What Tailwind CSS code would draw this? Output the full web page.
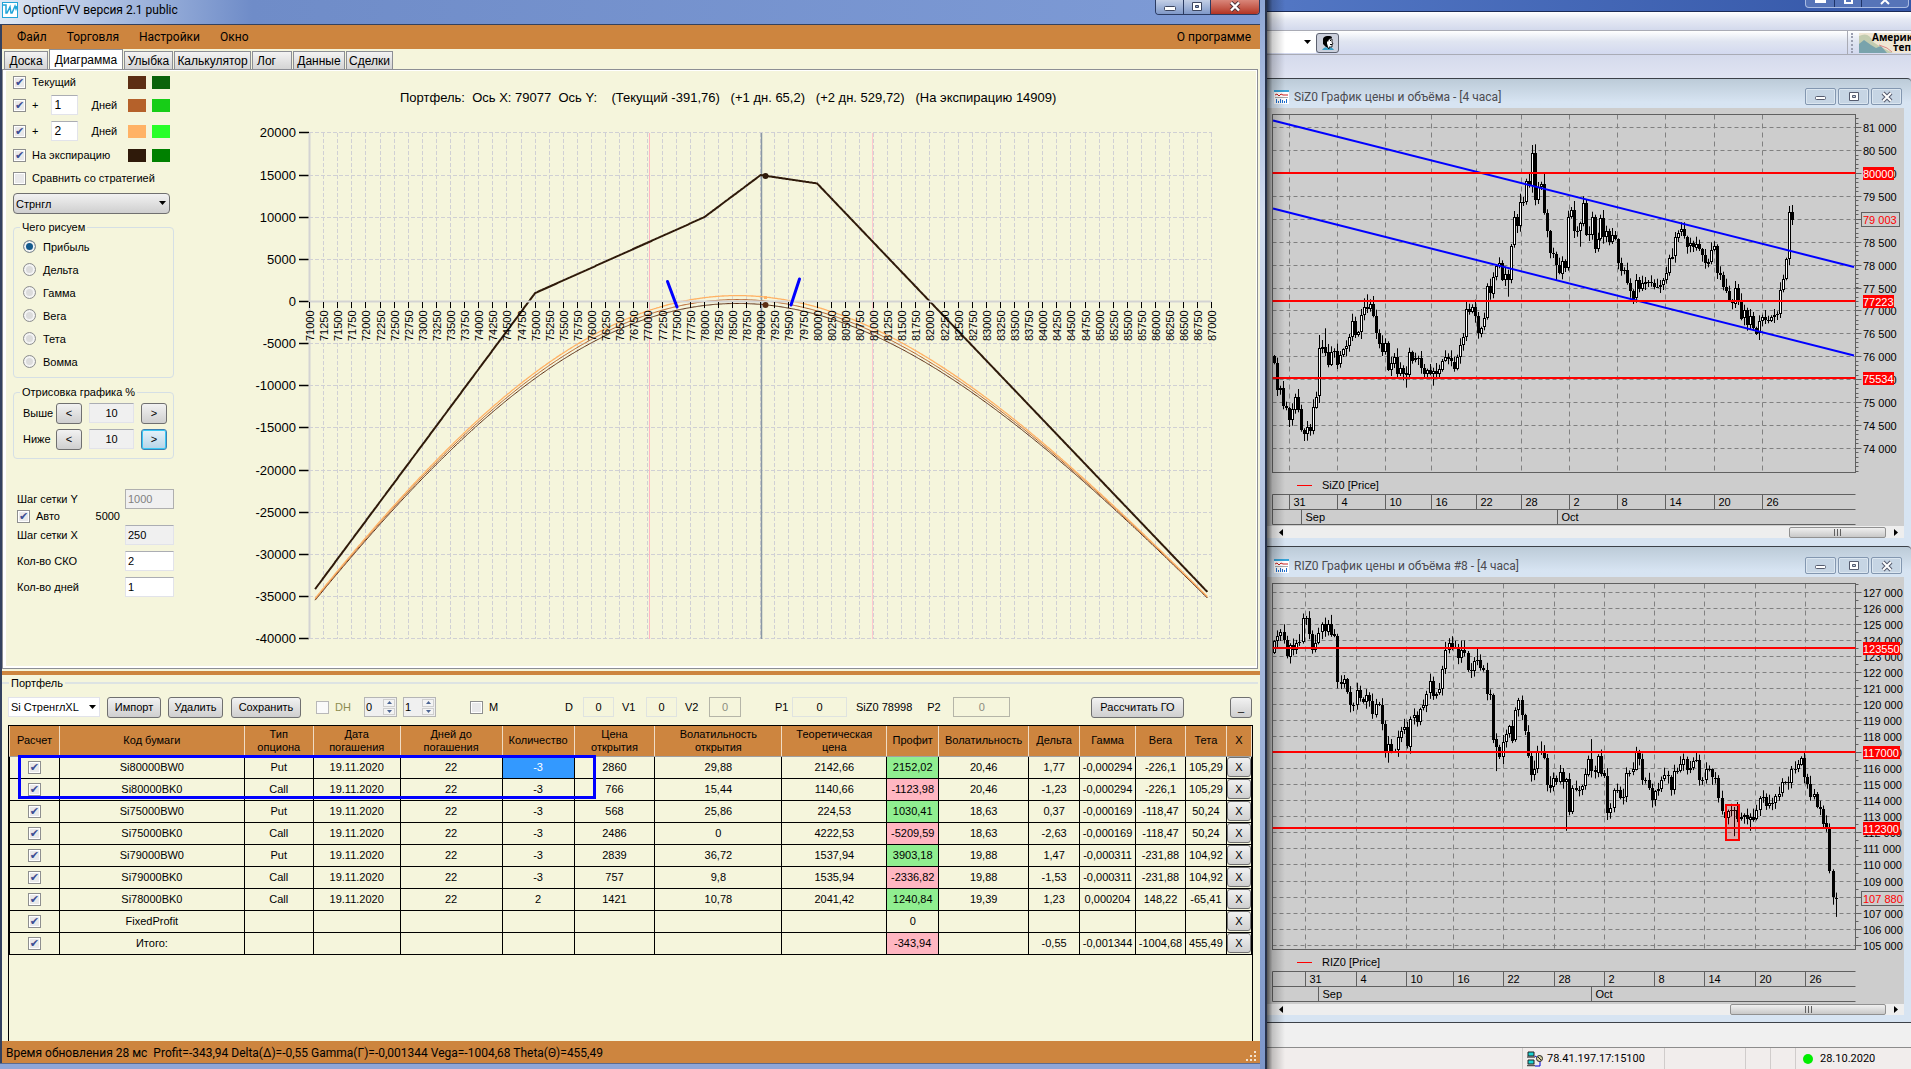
<!DOCTYPE html>
<html lang="ru">
 <head>
  <meta charset="utf-8"/>
  <meta content="width=device-width, initial-scale=1.0" name="viewport"/>
  <title>OptionFVV версия 2.1 public</title>
  <script src="https://cdn.jsdelivr.net/npm/@tailwindcss/browser@4"></script>
 </head>
 <body class="grid min-h-screen grid-cols-[1267fr_644fr] bg-[#d5daec] font-['Liberation_Sans',Arial,sans-serif] text-[11px] leading-4 text-black">

  <!-- Options window -->
  <main class="flex min-w-0 flex-col border-r-2 border-[#27324a] bg-linear-to-b from-[#8ea6d4] via-[#d3ddef] via-20% to-[#7d97ca] pr-[5px]">
   <header class="flex h-6 items-start bg-linear-to-r from-[#dfe8f4] via-[#6f8cc8] via-20% to-[#7e9bd6] pl-[2px]">
    <svg class="mt-[2px] h-4 w-4" viewBox="0 0 16 16"><rect width="16" height="16" fill="#23a4d8"/><rect x="1" y="1" width="14" height="14" fill="#fff"/><path d="M1 3h3v8h1l3-6 1 6h1l3-7 1 3 1-3" fill="none" stroke="#23a4d8" stroke-width="1.5"/></svg>
    <h1 class="ml-[5px] mt-[2px] font-[Roboto,sans-serif] text-[12px]">OptionFVV версия 2.1 public</h1>
    <div class="ml-auto flex h-[15px] divide-x divide-[#2b3b62] overflow-hidden rounded-b border border-t-0 border-[#2b3b62]">
     <button aria-label="Свернуть" class="grid w-7 place-items-center bg-linear-to-b from-[#c3cfe6] to-[#7f98c8]"><svg class="h-3 w-4" viewBox="0 0 16 12"><rect x="2.500" y="5.500" width="11" height="4" rx="1" fill="#fff" stroke="#3c4660"/></svg></button>
     <button aria-label="Развернуть" class="grid w-[27px] place-items-center bg-linear-to-b from-[#c3cfe6] to-[#7f98c8]"><svg class="h-3 w-4" viewBox="0 0 16 12"><path d="M3.500 1.500h9v8h-9z" fill="#fff" stroke="#3c4660"/><path d="M6.500 4.500h3v2h-3z" fill="#8ba0ca" stroke="#3c4660"/></svg></button>
     <button aria-label="Закрыть" class="grid w-12 place-items-center bg-linear-to-b from-[#d9867a] to-[#b23222]"><svg class="h-3 w-4" viewBox="0 0 16 12"><path d="M4 1.500l8 8M12 1.500l-8 8" stroke="#4a3038" stroke-width="4"/><path d="M4 1.500l8 8M12 1.500l-8 8" stroke="#fff" stroke-width="2.400"/></svg></button>
    </div>
   </header>

   <div class="flex flex-1 flex-col border-l-2 border-t border-[#33415f] bg-[#f5f5dc]">
    <nav class="flex h-6 items-center gap-5 bg-[#cd853f] pl-[15px] pr-[9px] font-[Roboto,sans-serif] text-[12px]">
     <a href="#">Файл</a><a href="#">Торговля</a><a href="#">Настройки</a><a href="#">Окно</a>
     <a class="ml-auto" href="#">О программе</a>
    </nav>

    <div class="flex h-5 items-end gap-px pl-[2px] text-[12px]">
     <button class="h-[18px] w-[44px] border border-b-0 border-[#8c8e94] bg-linear-to-b from-[#f3f3f3] to-[#d4d4d4]">Доска</button>
     <button class="h-5 w-[74px] border border-b-0 border-[#8c8e94] bg-white">Диаграмма</button>
     <button class="h-[18px] w-[49px] border border-b-0 border-[#8c8e94] bg-linear-to-b from-[#f3f3f3] to-[#d4d4d4]">Улыбка</button>
     <button class="h-[18px] w-[77px] border border-b-0 border-[#8c8e94] bg-linear-to-b from-[#f3f3f3] to-[#d4d4d4]">Калькулятор</button>
     <button class="h-[18px] w-[40px] border border-b-0 border-[#8c8e94] bg-linear-to-b from-[#f3f3f3] to-[#d4d4d4] pl-1 text-left">Лог</button>
     <button class="h-[18px] w-[52px] border border-b-0 border-[#8c8e94] bg-linear-to-b from-[#f3f3f3] to-[#d4d4d4]">Данные</button>
     <button class="h-[18px] w-[47px] border border-b-0 border-[#8c8e94] bg-linear-to-b from-[#f3f3f3] to-[#d4d4d4]">Сделки</button>
    </div>

    <section class="mr-[2px] border border-[#8c8e94] bg-white pb-[2px] pl-[3px] pr-px pt-px">
     <div class="flex bg-[#f5f5dc]">
      <!-- Settings -->
      <form class="w-[174px] shrink-0 pl-[7px]">
       <div class="flex h-[22px] items-center">
        <label class="flex items-center gap-[6px]"><input checked class="check size-[13px]" type="checkbox"/>Текущий</label>
        <span class="ml-auto h-[13px] w-[18px] bg-[#5c2e14]"></span><span class="ml-[6px] mr-[10px] h-[13px] w-[18px] bg-[#0b630b]"></span>
       </div>
       <div class="flex h-6 items-center">
        <label class="flex items-center gap-[6px]"><input checked class="check size-[13px]" type="checkbox"/>+</label>
        <input aria-label="Дней 1" class="ml-[13px] h-5 w-[27px] border border-[#e2e3ea] border-t-[#abadb3] bg-white pl-[2px] text-[12px]" value="1"/>
        <span class="ml-[13px]">Дней</span>
        <span class="ml-auto h-[13px] w-[18px] bg-[#b5612a]"></span><span class="ml-[6px] mr-[10px] h-[13px] w-[18px] bg-[#17cd17]"></span>
       </div>
       <div class="flex h-7 items-center">
        <label class="flex items-center gap-[6px]"><input checked class="check size-[13px]" type="checkbox"/>+</label>
        <input aria-label="Дней 2" class="ml-[13px] h-5 w-[27px] border border-[#e2e3ea] border-t-[#abadb3] bg-white pl-[2px] text-[12px]" value="2"/>
        <span class="ml-[13px]">Дней</span>
        <span class="ml-auto h-[13px] w-[18px] bg-[#ffb265]"></span><span class="ml-[6px] mr-[10px] h-[13px] w-[18px] bg-[#28ff28]"></span>
       </div>
       <div class="flex h-5 items-center">
        <label class="flex items-center gap-[6px]"><input checked class="check size-[13px]" type="checkbox"/>На экспирацию</label>
        <span class="ml-auto h-[13px] w-[18px] bg-[#2f1a0a]"></span><span class="ml-[6px] mr-[10px] h-[13px] w-[18px] bg-[#008000]"></span>
       </div>
       <div class="flex h-[26px] items-center">
        <label class="flex items-center gap-[6px]"><input class="check size-[13px]" type="checkbox"/>Сравнить со стратегией</label>
       </div>
       <div class="relative mt-[2px] w-[157px]">
        <select aria-label="Стратегия" class="h-[21px] w-full appearance-none rounded-sm border border-[#707070] bg-linear-to-b from-[#f2f2f2] to-[#cfcfcf] pl-[2px] text-[11px]"><option>Стрнгл</option></select>
        <svg class="pointer-events-none absolute right-1 top-2 h-[5px] w-[7px]" viewBox="0 0 7 5"><path d="M0 0h7L3.500 4z"/></svg>
       </div>
       <fieldset class="mt-[5px] w-[161px] rounded border border-[#d5dfe5] pb-1 pl-[9px]">
        <legend class="-ml-[3px] px-[2px]">Чего рисуем</legend>
        <label class="flex h-[23px] items-center gap-[7px]"><input checked class="dot" name="mode" type="radio"/>Прибыль</label>
        <label class="flex h-[23px] items-center gap-[7px]"><input class="dot" name="mode" type="radio"/>Дельта</label>
        <label class="flex h-[23px] items-center gap-[7px]"><input class="dot" name="mode" type="radio"/>Гамма</label>
        <label class="flex h-[23px] items-center gap-[7px]"><input class="dot" name="mode" type="radio"/>Вега</label>
        <label class="flex h-[23px] items-center gap-[7px]"><input class="dot" name="mode" type="radio"/>Тета</label>
        <label class="flex h-[23px] items-center gap-[7px]"><input class="dot" name="mode" type="radio"/>Вомма</label>
       </fieldset>
       <fieldset class="mt-[6px] w-[161px] rounded border border-[#d5dfe5] pb-[6px] pl-[9px]">
        <legend class="-ml-[3px] px-[2px]">Отрисовка графика %</legend>
        <div class="flex h-[26px] items-center">
         <label class="w-[33px]" for="up">Выше</label>
         <button class="h-[21px] w-[26px] rounded-[3px] border border-[#707070] bg-linear-to-b from-[#f2f2f2] to-[#cfcfcf]" type="button">&lt;</button>
         <input class="mx-[7px] h-5 w-[45px] border border-[#e2e3ea] border-t-[#abadb3] bg-[#f0f0f0] text-center" id="up" readonly value="10"/>
         <button class="h-[21px] w-[26px] rounded-[3px] border border-[#707070] bg-linear-to-b from-[#f2f2f2] to-[#cfcfcf]" type="button">&gt;</button>
        </div>
        <div class="flex h-[26px] items-center">
         <label class="w-[33px]" for="down">Ниже</label>
         <button class="h-[21px] w-[26px] rounded-[3px] border border-[#707070] bg-linear-to-b from-[#f2f2f2] to-[#cfcfcf]" type="button">&lt;</button>
         <input class="mx-[7px] h-5 w-[45px] border border-[#e2e3ea] border-t-[#abadb3] bg-[#f0f0f0] text-center" id="down" readonly value="10"/>
         <button class="h-[21px] w-[26px] rounded-[3px] border border-[#3c7fb1] bg-linear-to-b from-[#e6f2f9] to-[#b5d5e8] inset-ring inset-ring-[#38c8f4]" type="button">&gt;</button>
        </div>
       </fieldset>
       <div class="mt-[29px] w-[161px] pl-1">
        <div class="flex h-[21px] items-center justify-between"><label for="sy">Шаг сетки Y</label><input class="h-5 w-[49px] border border-[#afafaf] bg-[#f0f0f0] pl-[2px] text-[#808080]" disabled id="sy" value="1000"/></div>
        <div class="flex h-[14px] items-center"><label class="flex items-center gap-[6px]"><input checked class="check size-[13px]" type="checkbox"/>Авто</label><span class="ml-auto mr-[54px]">5000</span></div>
        <div class="flex h-6 items-center justify-between"><label for="sx">Шаг сетки X</label><input class="h-5 w-[49px] border border-[#e2e3ea] border-t-[#abadb3] bg-[#f0f0f0] pl-[2px]" id="sx" readonly value="250"/></div>
        <div class="flex h-7 items-center justify-between"><label for="sko">Кол-во СКО</label><input class="h-5 w-[49px] border border-[#e2e3ea] border-t-[#abadb3] bg-white pl-[2px]" id="sko" value="2"/></div>
        <div class="flex h-6 items-center justify-between"><label for="days">Кол-во дней</label><input class="h-5 w-[49px] border border-[#e2e3ea] border-t-[#abadb3] bg-white pl-[2px]" id="days" value="1"/></div>
       </div>
      </form>
      <svg class="min-w-0 flex-1" id="payoff" viewBox="180 71 1076 595"></svg>
     </div>
    </section>
    <div class="mt-[2px] h-1 bg-[#cd853f]"></div>

    <!-- Portfolio -->
    <fieldset class="mr-[2px] flex min-w-0 flex-1 flex-col border-t-2 border-[#dde3e3] pl-[6px] pr-[5px]">
     <legend class="ml-px px-[2px]">Портфель</legend>
     <div class="flex h-[34px] items-center pb-[2px] pr-px">
      <div class="relative w-[92px]">
       <select aria-label="Портфель" class="h-5 w-full appearance-none border border-[#e2e3ea] bg-white pl-[2px]"><option>Si СтренглXL</option></select>
       <svg class="pointer-events-none absolute right-1 top-2 h-[5px] w-[7px]" viewBox="0 0 7 5"><path d="M0 0h7L3.500 4z"/></svg>
      </div>
      <button class="ml-[7px] h-[21px] w-[54px] rounded-[3px] border border-[#707070] bg-linear-to-b from-[#f2f2f2] to-[#cfcfcf]">Импорт</button>
      <button class="ml-[7px] h-[21px] w-[55px] rounded-[3px] border border-[#707070] bg-linear-to-b from-[#f2f2f2] to-[#cfcfcf]">Удалить</button>
      <button class="ml-2 h-[21px] w-[70px] rounded-[3px] border border-[#707070] bg-linear-to-b from-[#f2f2f2] to-[#cfcfcf]">Сохранить</button>
      <label class="ml-[15px] flex w-[48px] items-center gap-[6px] text-[#8c8c50]"><input class="size-[13px] appearance-none border border-[#b8b8b8] bg-[#fafafa]" disabled type="checkbox"/>DH</label>
      <div class="flex h-5 w-[33px] border border-[#b5b5b5] bg-[#f0f0f0]"><input aria-label="DH от" class="min-w-0 flex-1 pl-px" value="0"/><span class="spin"></span></div>
      <div class="ml-[6px] flex h-5 w-[33px] border border-[#b5b5b5] bg-[#f0f0f0]"><input aria-label="DH до" class="min-w-0 flex-1 pl-px" value="1"/><span class="spin"></span></div>
      <label class="ml-[34px] flex w-[95px] items-center gap-[6px]"><input class="check size-[13px]" type="checkbox"/>M</label>
      <label class="w-[18px]" for="d">D</label><input class="h-5 w-[31px] border border-[#dfe3e0] text-center" id="d" value="0"/>
      <label class="ml-2 w-6" for="v1">V1</label><input class="h-5 w-[31px] border border-[#dfe3e0] text-center" id="v1" value="0"/>
      <label class="ml-2 w-6" for="v2">V2</label><input class="h-5 w-[32px] border border-[#b5b5a8] text-center text-[#8c8c80]" disabled id="v2" value="0"/>
      <label class="ml-[34px] w-[17px]" for="p1">P1</label><input class="h-5 w-[55px] border border-[#dfe3e0] text-center" id="p1" value="0"/>
      <span class="ml-[9px] whitespace-nowrap">SiZ0 78998</span>
      <label class="ml-[15px] w-[26px]" for="p2">P2</label><input class="h-5 w-[57px] border border-[#b5b5a8] text-center text-[#8c8c80]" disabled id="p2" value="0"/>
      <button class="ml-auto h-[21px] w-[93px] rounded-[3px] border border-[#707070] bg-linear-to-b from-[#f2f2f2] to-[#cfcfcf]">Рассчитать ГО</button>
      <button aria-label="Свернуть таблицу" class="ml-[46px] h-[21px] w-[22px] rounded-[3px] border border-[#707070] bg-linear-to-b from-[#f2f2f2] to-[#cfcfcf]">_</button>
     </div>
     <div class="relative flex-1 border border-b-0 border-black">
      <table class="w-full table-fixed border-collapse text-center">
       <colgroup id="cols"></colgroup>
       <thead><tr class="h-[30px] bg-[#cd853f] leading-[13px]" id="head"></tr></thead>
       <tbody id="rows"></tbody>
      </table>
      <div class="pointer-events-none absolute left-[9px] top-[29px] h-[44px] w-[578px] border-3 border-[#0000ff]"></div>
     </div>
    </fieldset>
    <footer class="flex h-[22px] items-center justify-between bg-[#cd853f] pl-1 pr-[2px] pt-[2px] font-[Roboto,sans-serif] text-[12px]">
     <span class="whitespace-pre">Время обновления 28 мс  Profit=-343,94 Delta(Δ)=-0,55 Gamma(Γ)=-0,001344 Vega=-1004,68 Theta(Θ)=455,49</span>
     <svg class="h-3 w-3 self-end" viewBox="0 0 12 12" fill="#f3e3cf"><path d="M8 0h2v2H8zM4 4h2v2H4zM8 4h2v2H8zM0 8h2v2H0zM4 8h2v2H4zM8 8h2v2H8z"/></svg>
    </footer>
   </div>
   <div class="h-[6px] border-t border-[#5b6b90] bg-[#8fa6d8]"></div>
  </main>

  <!-- Terminal behind -->
  <aside class="relative flex min-w-0 flex-col overflow-hidden">
   <div class="flex h-3 justify-end border-b border-[#1b2b57] bg-linear-to-r from-[#5377c4] to-[#3557a8] pr-[2px]">
    <div class="flex h-2 divide-x divide-[#1f3468] rounded-b border border-t-0 border-[#a9bbe2] bg-[#5674b8]">
     <span class="flex w-[29px] justify-center"><span class="h-[3px] w-[11px] bg-white"></span></span>
     <span class="flex w-[27px] justify-center"><span class="h-1 w-[9px] border-2 border-t-0 border-white"></span></span>
     <svg class="h-[7px] w-[46px]" viewBox="0 0 46 7"><path d="M19 4l4-4 4 4" stroke="#fff" stroke-width="2" fill="none"/></svg>
    </div>
   </div>
   <div class="h-[18px] bg-linear-to-b from-white via-[#e6eaf4] via-40% to-[#d3d9ec]"></div>
   <div class="flex h-[25px] items-center border-y border-[#a9abb5] bg-linear-to-b from-white via-[#e0e5f1] via-45% to-[#d3d9ef]">
    <button aria-label="Список" class="flex h-5 w-[49px] items-center justify-end bg-white pr-[5px]"><svg class="h-[5px] w-[7px]" viewBox="0 0 7 5"><path d="M0 0h7L3.500 4z"/></svg></button>
    <button aria-label="Пользователь" class="grid h-5 w-[23px] place-items-center rounded-[3px] border border-[#5d6270] bg-[#ccd0dc]"><svg class="h-4 w-4" viewBox="0 0 16 16"><path d="M2 15c1-2 3-3 6-3s5 1 6 3z" fill="#3aa0c8"/><path d="M6 4h6v3l1 2h-1v3H9v2L7 12z" fill="#fff" stroke="#000" stroke-width=".8"/><path d="M3 5c0-3 2-4 5-4 2 0 4 0 4 2L9 4 8 7l-1-1v3l1 3H6L3 9z"/><path d="M10 5h1v1h-1zM10 9h2v1h-2z"/></svg></button>
    <span class="ml-auto h-full border-l border-[#a9abb5]"></span>
    <span class="ml-[3px] h-5 border-l-2 border-dotted border-[#9a9eb0]"></span>
    <svg class="ml-[6px] h-5 w-[52px]" viewBox="0 0 52 20" font-family="Open Sans, sans-serif" font-size="10" font-weight="700"><rect width="52" height="20" fill="#efe6d4"/><path d="M0 3q10-5 14 6l8 5 12 6H0z" fill="#c3ccb0"/><path d="M0 11l5-4 7 5 5 3 5-2 6 7H0z" fill="#79a3ac"/><path d="M20 12l8 3 5 4" stroke="#d88" fill="none"/><text x="13" y="8">Американ</text><text x="34" y="18">тепло</text></svg>
   </div>
   <div class="h-[23px] bg-linear-to-b from-[#d5daec] to-[#e0e4f2]"></div>

   <section class="rounded-tr border-t border-[#3c4148] bg-linear-to-b from-[#bccbd8] to-[#d7e4f2] to-5%">
    <header class="flex h-[29px] items-center pl-[7px] pr-[9px] pt-[6px]">
     <svg class="h-[14px] w-[15px]" viewBox="0 0 15 14"><path d="M0 0h15v14H0z" fill="#fff"/><path d="M0 0h15v2H0z" fill="#35a3d8"/><path d="M1 5l2-1 2 2 2-2 2 1h5" stroke="#c22" fill="none"/><path d="M1 7.500h13" stroke="#aaa"/><path d="M2.500 13V9m2 4v-2m2 2V9m2 4v-3m2 3v-2m2 2V9" stroke="#1f6fd0"/></svg>
     <h2 class="ml-[5px] font-[Roboto,sans-serif] text-[12px] text-[#4b4b50]">SiZ0 График цены и объёма - [4 часа]</h2>
     <div class="capbtns ml-auto flex gap-[2px]"></div>
    </header>
    <div class="pb-2 pr-[7px]">
     <svg class="block w-full bg-[#cdcdcd]" id="si" viewBox="1267 108 637 418"></svg>
     <div class="flex h-3 items-center bg-[#eeeeee] pl-3 pr-[6px]">
      <svg class="h-[7px] w-1" viewBox="0 0 4 7"><path d="M4 0v7L0 3.500z"/></svg>
      <span class="ml-auto mr-2 grid h-[11px] w-[97px] place-items-center rounded-xs border border-[#909090] bg-linear-to-b from-[#f0f0f0] to-[#c8c8c8]"><span class="h-[7px] w-[7px] border-x border-[#606060] px-[2px]"><span class="block h-full w-px bg-[#606060]"></span></span></span>
      <svg class="h-[7px] w-1" viewBox="0 0 4 7"><path d="M0 0v7l4-3.500z"/></svg>
     </div>
    </div>
   </section>

   <section class="rounded-tr border-y border-[#3c4148] bg-linear-to-b from-[#bccbd8] to-[#d7e4f2] to-5%">
    <header class="flex h-[30px] items-center pl-[7px] pr-[9px] pt-[7px]">
     <svg class="h-[14px] w-[15px]" viewBox="0 0 15 14"><path d="M0 0h15v14H0z" fill="#fff"/><path d="M0 0h15v2H0z" fill="#35a3d8"/><path d="M1 5l2-1 2 2 2-2 2 1h5" stroke="#c22" fill="none"/><path d="M1 7.500h13" stroke="#aaa"/><path d="M2.500 13V9m2 4v-2m2 2V9m2 4v-3m2 3v-2m2 2V9" stroke="#1f6fd0"/></svg>
     <h2 class="ml-[5px] font-[Roboto,sans-serif] text-[12px] text-[#4b4b50]">RIZ0 График цены и объёма #8 - [4 часа]</h2>
     <div class="capbtns ml-auto flex gap-[2px]"></div>
    </header>
    <div class="pb-[7px] pr-[7px]">
     <svg class="block w-full bg-[#cdcdcd]" id="ri" viewBox="1267 577 637 427"></svg>
     <div class="flex h-[11px] items-center bg-[#eeeeee] pl-3 pr-[6px]">
      <svg class="h-[7px] w-1" viewBox="0 0 4 7"><path d="M4 0v7L0 3.500z"/></svg>
      <span class="ml-auto mr-2 grid h-[11px] w-[156px] place-items-center rounded-xs border border-[#909090] bg-linear-to-b from-[#f0f0f0] to-[#c8c8c8]"><span class="h-[7px] w-[7px] border-x border-[#606060] px-[2px]"><span class="block h-full w-px bg-[#606060]"></span></span></span>
      <svg class="h-[7px] w-1" viewBox="0 0 4 7"><path d="M0 0v7l4-3.500z"/></svg>
     </div>
    </div>
   </section>

   <div class="flex-1 border-b border-[#8c8c8c] bg-[#f0f0f0]"></div>
   <footer class="flex h-[21px] items-stretch justify-end divide-x divide-[#d0cccb] bg-[#f1edec] font-[Roboto,sans-serif] text-[11px] leading-[21px]">
    <span></span>
    <span class="flex w-[142px] items-center gap-1 pl-1">
     <svg class="h-4 w-4" viewBox="0 0 16 16"><path d="M1 1h6v4H1zM1 9h6v4H1z" fill="#19d3d3" stroke="#222"/><path d="M0 6h8M0 14.500h8" stroke="#555" stroke-width="1.500"/><path d="M8 5l3 2M13 10v5H8" stroke="#00d" fill="none"/><circle cx="12.500" cy="7.500" r="3" fill="#d8d0a0" stroke="#222"/><path d="M11 6l3 3" stroke="#222"/></svg>
     78.41.197.17:15100
    </span>
    <span class="w-[81px]"></span>
    <span class="w-[25px]"></span>
    <span class="w-[25px]"></span>
    <span class="flex w-[115px] items-center gap-[7px] pl-[7px]"><span class="size-[10px] rounded-full bg-[#00ee00]"></span>28.10.2020</span>
   </footer>
   <!-- drop shadow of the front window -->
   <div class="pointer-events-none absolute inset-y-0 left-0 w-[18px] bg-linear-to-r from-black/60 via-black/20 via-30% to-transparent"></div>
  </aside>

  <script>
   const $ = id => document.getElementById(id);

   // form control looks
   document.querySelectorAll('.check').forEach(el => el.className = checkClass());
   function checkClass() {
     return "grid size-[13px] shrink-0 appearance-none place-items-center border border-[#8e8f8f] bg-[#e9e9ea] inset-ring inset-ring-white checked:before:text-[11px] checked:before:leading-[11px] checked:before:font-['DejaVu_Sans'] checked:before:text-[#3c4f94] checked:before:content-['✔']";
   }
   document.querySelectorAll('.dot').forEach(el => el.className =
     'size-[13px] appearance-none rounded-full border border-[#8e8f8f] bg-[#dcdcdc] inset-ring-2 inset-ring-[#f4f4f4] checked:bg-[#145a8c]');
   document.querySelectorAll('.spin').forEach(el => {
     el.className = 'grid w-[14px] grid-rows-2 gap-px p-px';
     el.innerHTML = ['M0 3L2.5 0 5 3z', 'M0 0h5L2.5 3z'].map(d =>
       `<button aria-label="Шаг" class="grid place-items-center border border-[#cfcfcf] bg-[#f4f4f4]"><svg class="h-[3px] w-[5px]" viewBox="0 0 5 3"><path d="${d}" fill="#4a6392"/></svg></button>`).join('');
   });
   document.querySelectorAll('.capbtns').forEach(el => {
     const icons = {
       'Свернуть': '<rect x="2.5" y="5.5" width="10" height="3" rx="1" fill="#fff" stroke="#555b6e"/>',
       'Развернуть': '<path d="M3.500 1.500h9v8h-9z" fill="#fff" stroke="#555b6e"/><path d="M6.500 4.500h3v2h-3z" fill="#c3d2e2" stroke="#555b6e"/>',
       'Закрыть': '<path d="M4 2l8 8M12 2l-8 8" stroke="#555b6e" stroke-width="4"/><path d="M4 2l8 8M12 2l-8 8" stroke="#fff" stroke-width="2"/>',
     };
     el.innerHTML = Object.entries(icons).map(([name, svg]) =>
       `<button aria-label="${name}" class="grid h-[17px] w-[31px] place-items-center rounded-xs border border-[#8397b0] bg-[#c6d5e4] inset-ring inset-ring-[#dbe6f0]"><svg class="h-3 w-4" viewBox="0 0 16 12">${svg}</svg></button>`).join('');
   });

   // positions table
   const widths = [50, 185, 69, 87, 102, 72, 81, 127, 105, 52, 90, 51, 56, 50, 41, 25];
   const heads = ['Расчет', 'Код бумаги', 'Тип<br>опциона', 'Дата<br>погашения', 'Дней до<br>погашения', 'Количество', 'Цена<br>открытия',
     'Волатильность<br>открытия', 'Теоретическая<br>цена', 'Профит', 'Волатильность', 'Дельта', 'Гамма', 'Вега', 'Тета', 'X'];
   const rows = [
     'Si80000BW0|Put|19.11.2020|22|-3|2860|29,88|2142,66|2152,02|20,46|1,77|-0,000294|-226,1|105,29',
     'Si80000BK0|Call|19.11.2020|22|-3|766|15,44|1140,66|-1123,98|20,46|-1,23|-0,000294|-226,1|105,29',
     'Si75000BW0|Put|19.11.2020|22|-3|568|25,86|224,53|1030,41|18,63|0,37|-0,000169|-118,47|50,24',
     'Si75000BK0|Call|19.11.2020|22|-3|2486|0|4222,53|-5209,59|18,63|-2,63|-0,000169|-118,47|50,24',
     'Si79000BW0|Put|19.11.2020|22|-3|2839|36,72|1537,94|3903,18|19,88|1,47|-0,000311|-231,88|104,92',
     'Si79000BK0|Call|19.11.2020|22|-3|757|9,8|1535,94|-2336,82|19,88|-1,53|-0,000311|-231,88|104,92',
     'Si78000BK0|Call|19.11.2020|22|2|1421|10,78|2041,42|1240,84|19,39|1,23|0,000204|148,22|-65,41',
     'FixedProfit||||||||0|||||',
     'Итого:||||||||-343,94||-0,55|-0,001344|-1004,68|455,49',
   ];
   const total = widths.reduce((a, b) => a + b);
   $('cols').innerHTML = widths.map(w => `<col style="width:${w / total * 100}%">`).join('');
   $('head').innerHTML = heads.map(h => `<th class="whitespace-nowrap border-x border-b border-x-[#f0dcc4] border-b-[#a0a0a0] font-normal">${h}</th>`).join('');
   $('rows').innerHTML = rows.map((r, n) => {
     const cells = r.split('|').map((v, i) => {
       let bg = '';
       if (i === 8 && v !== '0') bg = v.startsWith('-') ? 'bg-[#ffb6c1]' : 'bg-[#90ee90]';
       if (i === 4 && n === 0) bg = 'bg-[#3399ff] text-white';
       return `<td class="whitespace-nowrap border border-black ${bg}">${v}</td>`;
     }).join('');
     return `<tr class="h-[22px]"><td class="border border-black"><input aria-label="Расчет" checked type="checkbox" class="mx-auto ${checkClass()}"></td>${cells}` +
       `<td class="border border-black"><button class="block h-5 w-full rounded-[3px] border border-[#707070] bg-linear-to-b from-[#f2f2f2] to-[#cfcfcf]">X</button></td></tr>`;
   }).join('');

   const line = (x1, y1, x2, y2, stroke, extra = '') => `<path d="M${x1} ${y1}L${x2} ${y2}" stroke="${stroke}" fill="none" ${extra}/>`;
   const crisp = v => Math.floor(v) + .5;

   // profit chart: Black-76 value of the portfolio
   const legs = [['P', 80000, -3, .2046], ['C', 80000, -3, .2046], ['P', 75000, -3, .1863], ['C', 75000, -3, .1863],
     ['P', 79000, -3, .1988], ['C', 79000, -3, .1988], ['C', 78000, 2, .1939]];
   const cdf = x => {
     const t = 1 / (1 + .2316419 * Math.abs(x));
     const p = Math.exp(-x * x / 2) * .3989423 * t * (.3193815 + t * (-.3565638 + t * (1.781478 + t * (-1.821256 + t * 1.330274))));
     return x > 0 ? 1 - p : p;
   };
   const price = (type, f, k, s, days) => {
     let call = Math.max(f - k, 0);
     if (days) {
       const sd = s * Math.sqrt(days / 365), d1 = Math.log(f / k) / sd + sd / 2;
       call = f * cdf(d1) - k * cdf(d1 - sd);
     }
     return type === 'C' ? call : call - f + k;
   };
   const sum = (f, days) => legs.reduce((a, [t, k, q, s]) => a + q * price(t, f, k, s, days), 0);
   const base = 15000 - sum(79000, 0);
   const X = p => 309.5 + (p - 71000) * .0564, Y = v => 301.5 - v * .008433;
   const curve = days => {
     let d = '';
     for (let p = 71100; p <= 86920; p += 20) d += (d ? 'L' : 'M') + X(p).toFixed(1) + ' ' + Y(base + sum(p, days)).toFixed(1);
     return d;
   };
   let s = '<g font-family="Liberation Sans, Arial, sans-serif">';
   s += '<text x="400" y="102" font-size="13" xml:space="preserve">Портфель:  Ось X: 79077  Ось Y:    (Текущий -391,76)   (+1 дн. 65,2)   (+2 дн. 529,72)   (На экспирацию 14909)</text>';
   for (let v = -40000; v <= 20000; v += 5000) {
     const y = crisp(Y(v));
     s += line(309, y, 1212, y, '#d0d0d4', 'stroke-dasharray="4 2"') + line(299, y, 309, y, '#000', 'stroke-width="1.500"');
     s += `<text x="296" y="${y + 4}" font-size="13" text-anchor="end">${v}</text>`;
   }
   for (let p = 71000; p <= 87000; p += 250) {
     const x = crisp(X(p));
     s += line(x, 133, x, 639, '#d0d0d4', 'stroke-dasharray="4 2"');
   }
   s += line(309.5, 133, 309.5, 639, '#d3d3d3', 'stroke-width="2"');
   s += line(649.5, 133, 649.5, 639, '#ffb6c1') + line(872.5, 133, 872.5, 639, '#ffc8cc') + line(761.5, 133, 761.5, 639, '#8a98a4', 'stroke-width="1.500"');
   s += `<path d="${curve(22)}" fill="none" stroke="#5c2e14"/><path d="${curve(21)}" fill="none" stroke="#b5612a"/><path d="${curve(20)}" fill="none" stroke="#ffb265" stroke-width="1.300"/>`;
   s += `<path d="${curve(0)}" fill="none" stroke="#2f1a0a" stroke-width="2"/>`;
   s += line(309, 301.5, 1212, 301.5, '#d3d3d3', 'stroke-width="2"');
   for (let p = 71000; p <= 87000; p += 250) {
     const x = crisp(X(p));
     s += line(x, 302, x, 308, '#000') + `<text transform="translate(${x + 4} 341) rotate(-90)" font-size="11">${p}</text>`;
   }
   s += '<circle cx="765.500" cy="176" r="3" fill="#2f1a0a"/><circle cx="765.500" cy="305" r="3" fill="#5c2e14"/><path d="M764 296h3v3h-3z" fill="#ffb265"/>';
   s += line(667.5, 281.5, 677, 307, '#00f', 'stroke-width="3" stroke-linecap="round"') + line(799.5, 279, 791, 305, '#00f', 'stroke-width="3" stroke-linecap="round"');
   $('payoff').innerHTML = s + '</g>';

   // candle charts, closes are kept as offsets from the chart origin
   function candles(o) {
     const L = 1272.5, R = 1855.5, gx = u => crisp(1260 + u / 2.4086), gy = u => o.y0 + u / o.k;
     let s = '<g font-family="Liberation Sans, Arial, sans-serif" font-size="11">';
     const n = (o.hi - o.lo) / o.step, dy = (o.yLo - o.yHi) / n;
     const labels = [];
     for (let i = 0; i <= n; i++) {
       const y = crisp(o.yHi + i * dy);
       s += line(L, y, R, y, '#808080', 'stroke-dasharray="4 3"') + line(R, y, R + 6, y, '#606060');
       const v = o.hi - i * o.step;
       labels.push(`<text x="1863" y="${y + 4}">${Math.floor(v / 1000)} ${String(v % 1000).padStart(3, '0')}</text>`);
     }
     const md = dy / o.minor;
     for (let y = o.yHi - Math.floor((o.yHi - o.top) / md) * md; y < o.bottom - 1; y += md) s += line(R, crisp(y), R + 3, crisp(y), '#606060');
     o.days.forEach(([u, t]) => {
       s += line(gx(u), o.top, gx(u), o.bottom, '#808080', 'stroke-dasharray="5 4"');
       s += line(gx(u), o.ax[0], gx(u), o.ax[1], '#606060') + `<text x="${gx(u) + 4}" y="${o.ax[1] - 4}">${t}</text>`;
     });
     o.months.forEach(([u, t]) => s += line(gx(u), o.ax[1], gx(u), o.ax[2], '#606060') + `<text x="${gx(u) + 4}" y="${o.ax[2] - 4}">${t}</text>`);
     o.ax.forEach(y => s += line(L, y, R, y, '#606060'));
     s += line(L, o.ax[0], L, o.ax[2], '#606060');
     s += `<rect x="${L}" y="${o.top}" width="${R - L}" height="${o.bottom - o.top}" fill="none" stroke="#606060"/>`;
     const step = (o.x1 - 1274.5) / (o.closes.length - 1);
     let prev = o.open;
     o.closes.forEach((c, i) => {
       const x = crisp(1274.5 + i * step), u = (x - 1260) * 2.4086;
       let hi = Math.min(prev, c) - 3 - i * 37 % 23, lo = Math.max(prev, c) + 3 + i * 53 % 19;
       o.spikes.forEach(([su, h, l]) => { if (Math.abs(su - u) < 3.7) { hi = h || hi; lo = l || lo; } });
       s += line(x, gy(hi).toFixed(1), x, gy(lo).toFixed(1), '#000');
       const t = Math.round(gy(Math.min(prev, c))), h = Math.max(1, Math.round(Math.abs(c - prev) / o.k));
       s += c < prev && h > 2
         ? `<rect x="${x - 1}" y="${t + .5}" width="2" height="${h - 1}" fill="#fff" stroke="#000"/>`
         : `<rect x="${x - 1.5}" y="${t}" width="3" height="${h}"/>`;
       prev = c;
     });
     s += o.extra || '';
     s += labels.join('');
     o.levels.forEach(([y, t]) => {
       s += line(L, y, R, y, '#f00', 'stroke-width="2"');
       s += `<rect x="1863" y="${y - 6}" width="${t.length * 6 + 1}" height="13" fill="#f00"/><text x="1863" y="${y + 5}" fill="#fff">${t}</text>`;
     });
     s += `<rect x="1861.500" y="${o.last[0] - 7}" width="${o.last[1].length * 6 + 2}" height="14" fill="#cdcdcd" stroke="#606060"/><text x="1863" y="${o.last[0] + 4}" fill="#f00">${o.last[1]}</text>`;
     s += line(1297, o.legend[0], 1312, o.legend[0], '#f00') + `<text x="1322" y="${o.legend[0] + 3}">${o.legend[1]}</text>`;
     $(o.id).innerHTML = s + '</g>';
   }

   candles({
     id: 'si', y0: 100, k: 3, top: 114.5, bottom: 472.5, hi: 81000, lo: 74000, step: 500, yHi: 127.6, yLo: 448.4, minor: 5,
     days: [[71, 31], [187, 4], [302, 10], [413, 16], [521, 22], [630, 28], [746, 2], [861, 8], [977, 14], [1095, 20], [1211, 26]],
     months: [[100, 'Sep'], [717, 'Oct']], ax: [494.5, 509.5, 524.5], x1: 1792.7, open: 768,
     levels: [[173, '80000'], [301, '77223'], [378, '75534']], last: [219.5, '79 003'], legend: [485.5, 'SiZ0 [Price]'],
     spikes: [[114, 0, 1022], [143, 705, 0], [157, 685, 0], [251, 595, 0], [258, 583, 0], [273, 588, 0], [352, 0, 863], [420, 0, 857], [499, 605, 0],
       [600, 0, 590], [658, 135, 0], [687, 220, 0], [716, 0, 540], [760, 303, 0], [774, 0, 440], [1020, 367, 0], [1276, 318, 0], [1283, 315, 375]],
     closes: [790, 870, 865, 918, 925, 960, 928, 890, 928, 990, 1003, 982, 995, 922, 890, 745, 740, 757, 795, 755, 752, 793, 765, 748, 738, 710, 663, 705, 697,
       645, 620, 627, 612, 648, 698, 730, 757, 730, 810, 790, 770, 822, 803, 820, 825, 755, 782, 775, 775, 805, 823, 810, 822, 812, 822, 808, 782, 770, 775,
       785, 805, 770, 735, 710, 627, 635, 620, 648, 700, 683, 655, 558, 580, 530, 498, 490, 540, 523, 540, 437, 352, 378, 305, 305, 242, 258, 158, 300, 262,
       252, 340, 393, 460, 463, 495, 520, 482, 502, 350, 330, 393, 393, 370, 308, 403, 403, 350, 447, 418, 355, 412, 393, 425, 405, 418, 490, 513, 510, 548,
       572, 595, 540, 568, 550, 545, 545, 548, 560, 560, 555, 540, 520, 475, 470, 412, 398, 388, 410, 440, 430, 443, 432, 448, 465, 490, 485, 450, 438, 518,
       525, 560, 572, 603, 610, 563, 605, 655, 630, 675, 648, 683, 700, 663, 652, 660, 662, 650, 645, 643, 570, 538, 478, 337, 360],
     extra: line(1273, 120.5, 1854, 267, '#00f', 'stroke-width="2"') + line(1273, 208.5, 1854, 355.5, '#00f', 'stroke-width="2"'),
   });
   candles({
     id: 'ri', y0: 540, k: 2.964, top: 583.5, bottom: 949.5, hi: 127000, lo: 105000, step: 1000, yHi: 592.3, yLo: 945.2, minor: 2,
     days: [[110, 31], [233, 4], [353, 10], [466, 16], [587, 22], [710, 28], [830, 2], [950, 8], [1071, 14], [1193, 20], [1314, 26]],
     months: [[141, 'Sep'], [798, 'Oct']], ax: [971.5, 986.5, 1001.5], x1: 1836.3, open: 335,
     levels: [[648, '123550'], [752, '117000'], [828, '112300']], last: [898.5, '107 880'], legend: [962.5, 'RIZ0 [Price]'],
     spikes: [[172, 222, 0], [306, 0, 660], [405, 385, 0], [466, 285, 0], [489, 298, 0], [526, 322, 0], [571, 0, 685], [622, 468, 0], [678, 597, 0],
       [739, 0, 862], [798, 590, 0], [1140, 0, 878], [1183, 0, 862], [1388, 1045, 1117]],
     closes: [300, 285, 272, 297, 345, 310, 325, 305, 302, 232, 230, 278, 325, 305, 275, 250, 272, 248, 280, 285, 422, 428, 412, 450, 490, 490, 445, 470, 480,
       460, 478, 518, 485, 488, 545, 630, 605, 625, 625, 585, 565, 555, 612, 530, 520, 540, 500, 490, 455, 418, 462, 455, 442, 382, 325, 305, 320, 318, 350,
       325, 335, 385, 388, 358, 355, 378, 385, 455, 458, 590, 615, 645, 600, 575, 552, 595, 505, 475, 520, 568, 640, 695, 678, 625, 628, 645, 725, 733, 705,
       718, 688, 718, 708, 805, 735, 742, 742, 730, 695, 648, 683, 690, 640, 692, 700, 810, 795, 742, 742, 765, 762, 690, 690, 680, 625, 650, 712, 712, 735,
       772, 745, 738, 710, 698, 702, 742, 685, 685, 665, 648, 680, 675, 655, 652, 710, 712, 680, 680, 705, 705, 765, 805, 823, 803, 800, 800, 828, 822, 815,
       828, 820, 828, 800, 765, 762, 790, 780, 780, 760, 752, 718, 718, 720, 678, 680, 665, 645, 702, 722, 762, 752, 792, 797, 840, 855, 982, 1060, 1062],
     extra: '<rect x="1726" y="805" width="13" height="35" fill="#f00" fill-opacity=".15" stroke="#f00" stroke-width="2"/>',
   });
  </script>
 </body>
</html>
